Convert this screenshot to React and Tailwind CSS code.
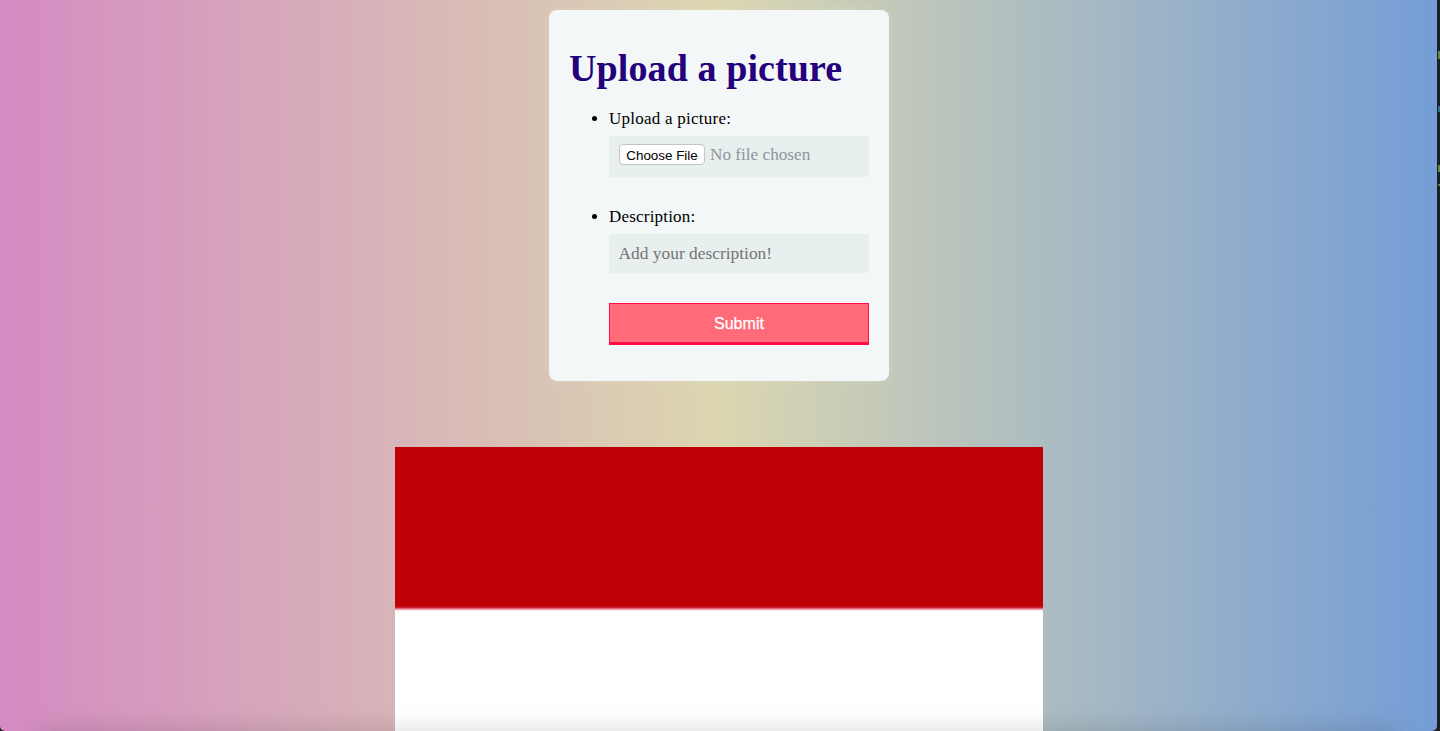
import React from "react";

const serif = "font-['Liberation_Serif',Georgia,serif]";
const sans = "font-['Liberation_Sans',Arial,sans-serif]";

export default function App() {
  return (
    <div className="relative h-screen overflow-hidden bg-[#1d1f24] pr-[3px]">
      <div className={`relative h-full overflow-hidden rounded-b-[5px] bg-[linear-gradient(to_right,#d48bc2,#dbd6b0_50%,#749dd6)] ${serif}`}>
        <main className="flex flex-col items-center pt-[10px] pl-px">
          {/* Upload form */}
          <form className="w-[340px] h-[371px] rounded-lg bg-[#f3f7f8] px-5 pt-[34px] shadow-[0_0_12px_rgba(255,255,255,0.15)]">
            <h1 className="text-[38px] leading-[48px] font-bold text-[#24007c] tracking-[0.1px]">Upload a picture</h1>
            <ul className="list-disc pl-10 mt-4 text-[17px] leading-[22px] text-black">
              <li className="pb-[29px]">
                <label htmlFor="picture" className="block tracking-[0.25px]">Upload a picture:</label>
                <div className="mt-[6px] flex h-[41px] w-[260px] items-center rounded-[3px] bg-[#e7efef] pl-[10px] pb-[4px]">
                  <input
                    id="picture"
                    type="file"
                    className="w-full text-[17.2px] text-[#8c979c] file:mr-[5px] file:h-[21px] file:w-[86px] file:rounded-[4px] file:border file:border-[#c4c4c4] file:bg-white file:p-0 file:text-[13.4px] file:text-black file:font-['Liberation_Sans',Arial,sans-serif]"
                  />
                </div>
              </li>
              <li>
                <label htmlFor="description" className="block tracking-[0.2px]">Description:</label>
                <input
                  id="description"
                  type="text"
                  placeholder="Add your description!"
                  className="mt-[6px] block h-[39px] w-[260px] rounded-[3px] bg-[#e7efef] pl-[9.5px] pr-[10px] text-[17.4px] placeholder:text-[#757575] outline-none"
                />
              </li>
            </ul>
            <button
              type="button"
              className={`mt-[30px] ml-10 block h-[42px] w-[260px] border border-b-[3px] border-[#ff0d45] bg-[#ff6b79] pt-px text-[16px] tracking-[0.05px] text-white [-webkit-text-stroke:0.25px_white] ${sans}`}
            >
              Submit
            </button>
          </form>

          {/* Uploaded picture */}
          <div className="mt-[66px] w-[648px] shrink-0">
            <div className="h-[159px] bg-[#bf0006]" />
            <div className="h-[5px] bg-[linear-gradient(to_bottom,#bf0006,#c8283a,#f3a0ac,#ffffff)]" />
            <div className="h-[200px] bg-white" />
          </div>
        </main>

        {/* Shadow at the window's lower edge */}
        <div className="absolute left-10 right-10 -bottom-5 h-5 shadow-[0_0_26px_rgba(0,0,0,0.16)] pointer-events-none" />
      </div>

      {/* Bits of the next window showing in the strip on the right */}
      <div className="absolute right-0 top-[51px] h-[8px] w-[2px] bg-[#5c8a4a]" />
      <div className="absolute right-0 top-[106px] h-[6px] w-[2px] bg-[#2f6f8f]" />
      <div className="absolute right-0 top-[165px] h-[7px] w-[2px] bg-[#5c8a4a]" />
      <div className="absolute right-0 top-[184px] h-[2px] w-[2px] bg-[#5c8a4a]" />
    </div>
  );
}
